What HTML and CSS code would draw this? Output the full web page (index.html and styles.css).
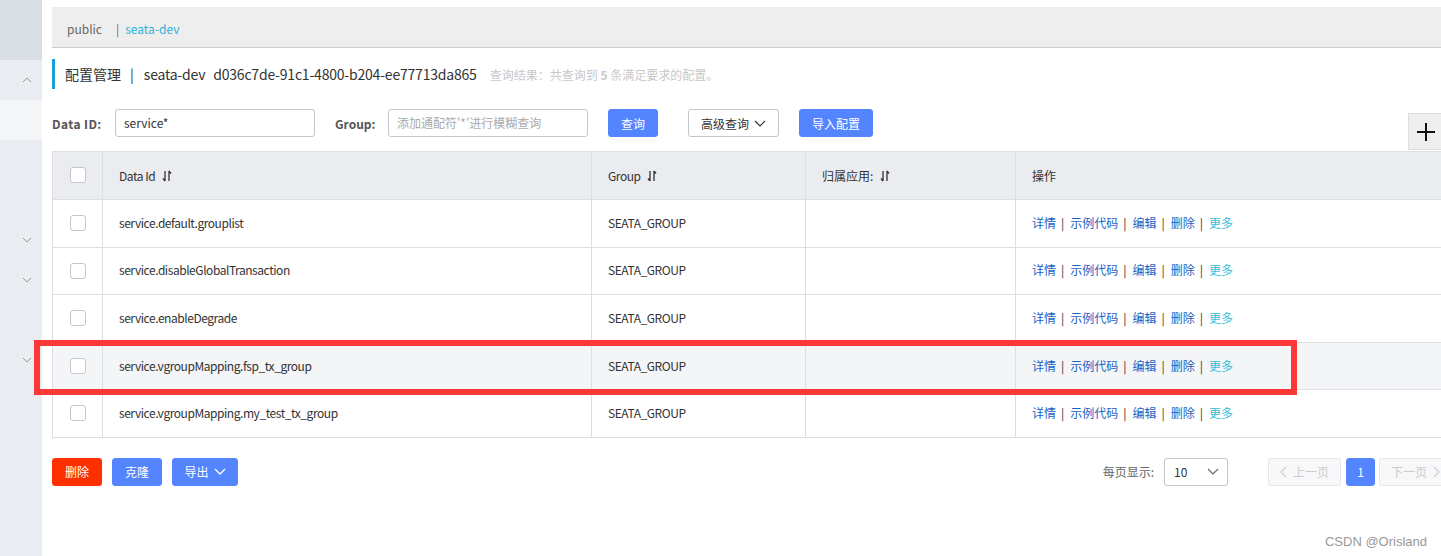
FILE: index.html
```html
<!DOCTYPE html>
<html lang="zh-CN">
<head>
<meta charset="utf-8">
<title>配置管理</title>
<link rel="stylesheet" href="styles.css">
</head>
<body>
<div class="layout">
  <aside class="sidebar">
    <div class="side-top"></div>
    <div class="side-item"><svg class="chev" viewBox="0 0 10 6" width="10" height="6"><polyline points="1,5 5,1 9,5" fill="none" stroke="#999" stroke-width="1"/></svg></div>
    <div class="side-item active"></div>
    <div class="side-item"></div>
    <div class="side-item"></div>
    <div class="side-item"><svg class="chev" viewBox="0 0 10 6" width="10" height="6"><polyline points="1,1 5,5 9,1" fill="none" stroke="#999" stroke-width="1"/></svg></div>
    <div class="side-item"><svg class="chev" viewBox="0 0 10 6" width="10" height="6"><polyline points="1,1 5,5 9,1" fill="none" stroke="#999" stroke-width="1"/></svg></div>
    <div class="side-item"></div>
    <div class="side-item"><svg class="chev" viewBox="0 0 10 6" width="10" height="6"><polyline points="1,1 5,5 9,1" fill="none" stroke="#999" stroke-width="1"/></svg></div>
  </aside>
  <main class="main">
    <div class="ns-bar">
      <span class="ns">public</span>
      <span class="ns-sep">|</span>
      <span class="ns ns-active">seata-dev</span>
    </div>
    <div class="title-row">
      <span class="title">配置管理<span class="t-sep">|</span><span class="t-latin">seata-dev</span><span class="t-latin t-id">d036c7de-91c1-4800-b204-ee77713da865</span></span>
      <span class="result">查询结果：共查询到 <b>5</b> 条满足要求的配置。</span>
    </div>
    <div class="search-row">
      <label class="lbl">Data ID:</label>
      <div class="input">service*</div>
      <label class="lbl lbl-group">Group:</label>
      <div class="input placeholder">添加通配符'*'进行模糊查询</div>
      <button class="btn btn-primary btn-query">查询</button>
      <button class="btn btn-normal btn-adv">高级查询 <svg viewBox="0 0 12 7" width="12" height="7"><polyline points="1,1 6,6 11,1" fill="none" stroke="#333" stroke-width="1.2"/></svg></button>
      <button class="btn btn-primary btn-import">导入配置</button>
    </div>
    <button class="plus" aria-label="add"><svg viewBox="0 0 20 20" width="20" height="20"><path d="M10 1v18M1 10h18" stroke="#111" stroke-width="2"/></svg></button>
    <table class="grid">
      <colgroup>
        <col class="c-check"><col class="c-id"><col class="c-group"><col class="c-app"><col>
      </colgroup>
      <thead>
        <tr>
          <th class="chk"><span class="box"></span></th>
          <th class="lt">Data Id <svg class="sort" viewBox="0 0 10 12" width="10" height="12"><path d="M3 1v10M3 11L1 8.5M7 11V1M7 1l2 2.5" fill="none" stroke="#333" stroke-width="1.3"/></svg></th>
          <th class="lt">Group <svg class="sort" viewBox="0 0 10 12" width="10" height="12"><path d="M3 1v10M3 11L1 8.5M7 11V1M7 1l2 2.5" fill="none" stroke="#333" stroke-width="1.3"/></svg></th>
          <th>归属应用: <svg class="sort" viewBox="0 0 10 12" width="10" height="12"><path d="M3 1v10M3 11L1 8.5M7 11V1M7 1l2 2.5" fill="none" stroke="#333" stroke-width="1.3"/></svg></th>
          <th>操作</th>
        </tr>
      </thead>
      <tbody>
        <tr>
          <td class="chk"><span class="box"></span></td>
          <td class="lt">service.default.grouplist</td>
          <td class="lt">SEATA_GROUP</td>
          <td></td>
          <td class="ops"><a>详情</a><i>|</i><a>示例代码</a><i>|</i><a>编辑</a><i>|</i><a>删除</a><i>|</i><a class="more">更多</a></td>
        </tr>
        <tr>
          <td class="chk"><span class="box"></span></td>
          <td class="lt">service.disableGlobalTransaction</td>
          <td class="lt">SEATA_GROUP</td>
          <td></td>
          <td class="ops"><a>详情</a><i>|</i><a>示例代码</a><i>|</i><a>编辑</a><i>|</i><a>删除</a><i>|</i><a class="more">更多</a></td>
        </tr>
        <tr>
          <td class="chk"><span class="box"></span></td>
          <td class="lt">service.enableDegrade</td>
          <td class="lt">SEATA_GROUP</td>
          <td></td>
          <td class="ops"><a>详情</a><i>|</i><a>示例代码</a><i>|</i><a>编辑</a><i>|</i><a>删除</a><i>|</i><a class="more">更多</a></td>
        </tr>
        <tr class="hover">
          <td class="chk"><span class="box"></span></td>
          <td class="lt">service.vgroupMapping.fsp_tx_group</td>
          <td class="lt">SEATA_GROUP</td>
          <td></td>
          <td class="ops"><a>详情</a><i>|</i><a>示例代码</a><i>|</i><a>编辑</a><i>|</i><a>删除</a><i>|</i><a class="more">更多</a></td>
        </tr>
        <tr>
          <td class="chk"><span class="box"></span></td>
          <td class="lt">service.vgroupMapping.my_test_tx_group</td>
          <td class="lt">SEATA_GROUP</td>
          <td></td>
          <td class="ops"><a>详情</a><i>|</i><a>示例代码</a><i>|</i><a>编辑</a><i>|</i><a>删除</a><i>|</i><a class="more">更多</a></td>
        </tr>
      </tbody>
    </table>
    <div class="footer-row">
      <div class="batch">
        <button class="btn btn-danger">删除</button>
        <button class="btn btn-primary">克隆</button>
        <button class="btn btn-primary btn-export">导出 <svg viewBox="0 0 12 7" width="12" height="7"><polyline points="1,1 6,6 11,1" fill="none" stroke="#fff" stroke-width="1.4"/></svg></button>
      </div>
      <div class="pager">
        <span class="pg-label">每页显示:</span>
        <div class="select">10 <svg viewBox="0 0 12 7" width="12" height="7"><polyline points="1,1 6,6 11,1" fill="none" stroke="#666" stroke-width="1.1"/></svg></div>
        <button class="pg pg-prev"><svg viewBox="0 0 7 12" width="7" height="12"><polyline points="6,1 1,6 6,11" fill="none" stroke="#ccc" stroke-width="1.2"/></svg>上一页</button>
        <button class="pg pg-cur">1</button>
        <button class="pg pg-next">下一页<svg viewBox="0 0 7 12" width="7" height="12"><polyline points="1,1 6,6 1,11" fill="none" stroke="#ccc" stroke-width="1.2"/></svg></button>
      </div>
    </div>
  </main>
</div>
<div class="highlight"></div>
<div class="watermark">CSDN @Orisland</div>
</body>
</html>
```

FILE: styles.css
```css
* { box-sizing: border-box; }
html, body { margin: 0; padding: 0; }
body {
  width: 1441px;
  height: 556px;
  overflow: hidden;
  position: relative;
  background: #fff;
  font-family: "Noto Sans CJK SC", "Noto Sans", sans-serif;
  font-size: 12px;
  color: #333;
}
.layout { display: flex; height: 556px; }
.sidebar {
  width: 42px;
  flex: none;
  background: #e9ecf1;
  display: flex;
  flex-direction: column;
}
.side-top { height: 60px; background: #d9dde4; }
.side-item {
  height: 40px;
  display: flex;
  align-items: center;
  justify-content: flex-end;
  padding-right: 10px;
}
.side-item.active { background: #f5f6f8; }
.chev { display: block; }

.main {
  position: relative;
  flex: none;
  width: 1410px;
  padding: 7px 0 0 10px;
}
.ns-bar {
  height: 41px;
  background: #eeeeee;
  border-bottom: 1px solid #cccccc;
  display: flex;
  align-items: center;
  padding-left: 15px;
  padding-top: 3px;
  width: 1389px;
}
.ns { color: #666; font-size: 12px; }
.ns-sep { color: #666; margin: 0 6px 0 14px; }
.ns-active { color: #2fb1d6; }

.title-row {
  margin-top: 11px;
  height: 30px;
  border-left: 3px solid #1a9ed8;
  display: flex;
  align-items: center;
  padding-left: 10px;
}
.title { font-size: 14px; color: #333; }
.t-sep { margin: 0 10px 0 9px; }
.t-latin { letter-spacing: -0.2px; }
.t-id { margin-left: 8px; }
.result { margin-left: 13px; font-size: 12px; color: #c8c8c8; }
.result b { font-weight: 700; }

.search-row {
  margin-top: 20px;
  height: 28px;
  display: flex;
  align-items: center;
}
.lbl { font-weight: 700; color: #555; font-size: 12px; width: 63px; letter-spacing: 0.4px; }
.lbl-group { margin-left: 20px; width: 53px; letter-spacing: 0; }
.input {
  width: 200px;
  height: 28px;
  border: 1px solid #c4c6cf;
  border-radius: 3px;
  padding: 0 8px;
  line-height: 26px;
  color: #333;
}
.input.placeholder { color: #aaa; }
.btn {
  height: 28px;
  border-radius: 3px;
  font-family: inherit;
  font-size: 12px;
  padding: 0;
  border: 1px solid transparent;
  display: inline-flex;
  align-items: center;
  justify-content: center;
  gap: 5px;
  white-space: nowrap;
  cursor: pointer;
}
.btn-primary { background: #5584ff; color: #fff; border-color: #5584ff; }
.btn-danger { background: #ff3000; color: #fff; border-color: #ff3000; }
.btn-normal { background: #fff; color: #333; border-color: #c4c6cf; }
.btn-query { margin-left: 20px; width: 50px; }
.btn-adv { margin-left: 30px; width: 91px; }
.btn-import { margin-left: 20px; width: 74px; }

.plus {
  position: absolute;
  left: 1366px;
  top: 113px;
  width: 36px;
  height: 37px;
  background: #eeeeee;
  border: 1px solid #dddddd;
  padding: 0;
  display: flex;
  align-items: center;
  justify-content: center;
}

.grid {
  margin-top: 14px;
  width: 1400px;
  border-collapse: collapse;
  table-layout: fixed;
}
.c-check { width: 50px; }
.c-id { width: 489px; }
.c-group { width: 214px; }
.c-app { width: 210px; }
.grid th, .grid td {
  border: 1px solid #dcdee3;
  text-align: left;
  padding: 0 0 0 16px;
  font-weight: 400;
  font-size: 12px;
  color: #333;
  white-space: nowrap;
}
.grid .lt { letter-spacing: -0.45px; }
.grid th { background: #ebecf0; height: 48px; padding-bottom: 1px; }
.grid td { height: 47.6px; padding-bottom: 2px; }
.grid tr.hover td { background: #f4f5f7; }
.grid .chk { padding: 0; text-align: center; }
.box {
  display: inline-block;
  width: 16px;
  height: 16px;
  border: 1px solid #c4c6cf;
  border-radius: 3px;
  background: #fff;
  vertical-align: middle;
  margin-top: -5px;
}
.sort { vertical-align: -1px; margin-left: 4px; }
.ops a { color: #1a62c2; }
.ops a.more { color: #33bfdc; }
.ops i { font-style: normal; color: #333; margin: 0 6px 0 5px; }

.footer-row {
  margin-top: 20px;
  height: 28px;
  display: flex;
  justify-content: space-between;
  align-items: center;
  width: 1400px;
}
.batch { display: flex; gap: 10px; }
.batch .btn { width: 50px; }
.batch .btn-export { width: 66px; }
.pager { display: flex; align-items: center; }
.pg-label { color: #666; margin-right: 10px; }
.select {
  width: 64px;
  height: 28px;
  border: 1px solid #c4c6cf;
  border-radius: 3px;
  display: flex;
  align-items: center;
  justify-content: space-between;
  padding: 0 8px 0 9px;
  color: #333;
  margin-right: 40px;
}
.pg {
  height: 28px;
  border-radius: 3px;
  font-family: inherit;
  font-size: 12px;
  padding: 0;
  display: inline-flex;
  align-items: center;
  justify-content: center;
  gap: 6px;
}
.pg-prev, .pg-next {
  width: 73px;
  background: #f7f8fa;
  border: 1px solid #e6e7eb;
  color: #ccc;
}
.pg-cur {
  width: 29px;
  margin: 0 4px 0 5px;
  background: #5584ff;
  border: 1px solid #5584ff;
  color: #fff;
}

.highlight {
  position: absolute;
  left: 34px;
  top: 340px;
  width: 1263px;
  height: 55px;
  border: 6px solid #fd3838;
  pointer-events: none;
}
.watermark {
  position: absolute;
  right: 14px;
  bottom: 7px;
  font-family: "Liberation Sans", Arial, sans-serif;
  font-size: 13px;
  color: #999;
}
```
